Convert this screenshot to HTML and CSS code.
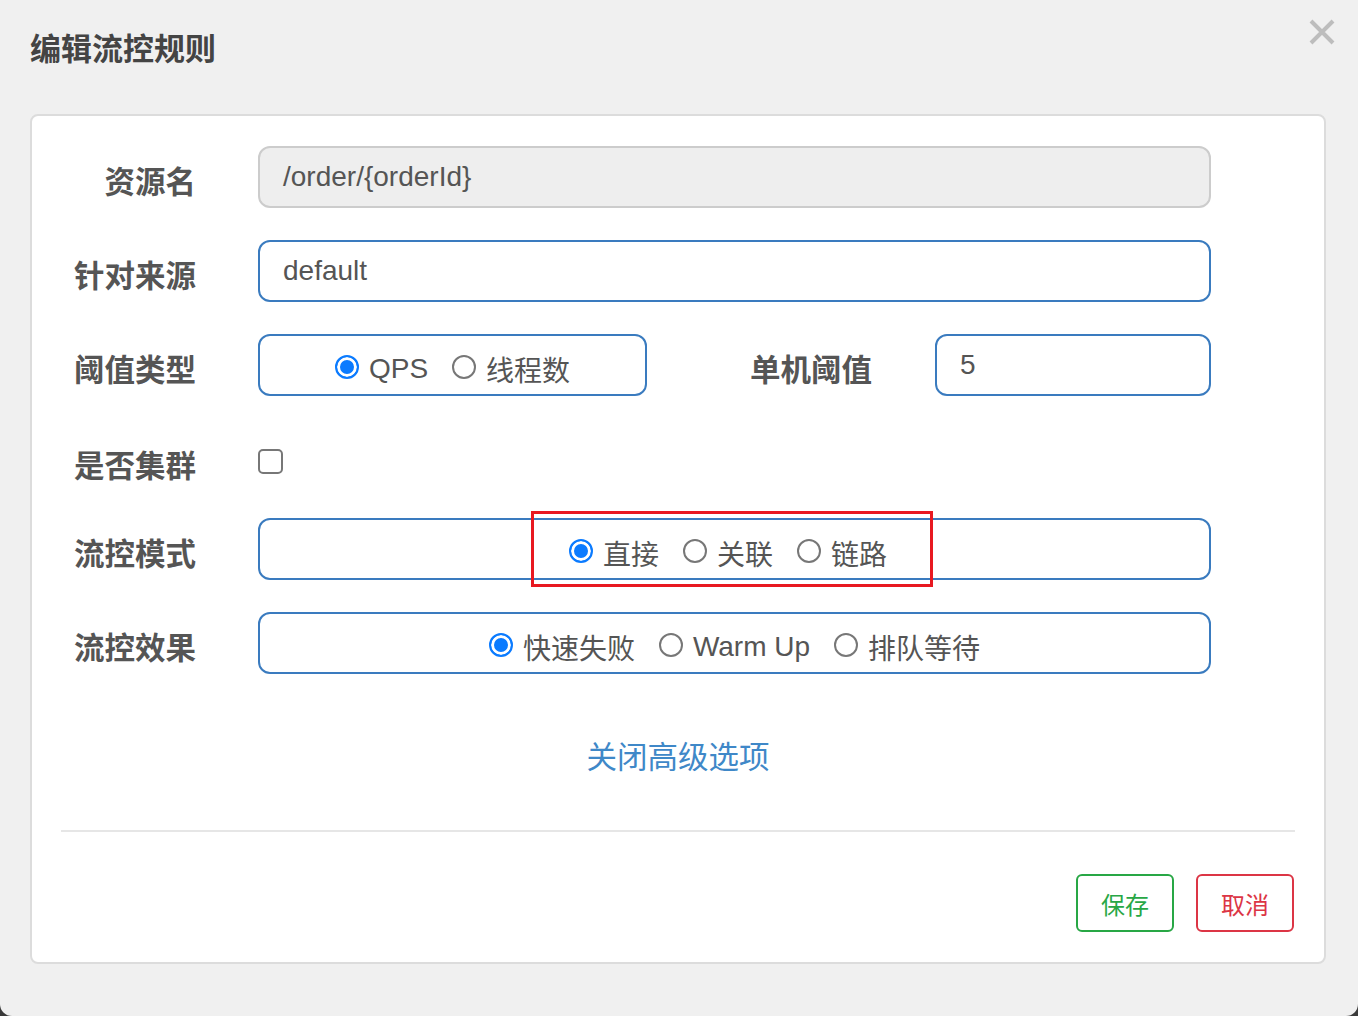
FILE: index.html
```html
<!DOCTYPE html>
<html lang="zh-CN">

<head>
  <meta charset="UTF-8">
  <meta name="viewport" content="width=device-width, initial-scale=1.0">
  <link rel="stylesheet" href="styles.css">
  <title>编辑流控规则</title>
</head>

<body>
  <div class="dialog">
    <div class="header">
      <h1>编辑流控规则</h1>
      <span class="close">
        <svg width="26" height="26" viewBox="0 0 26 26">
          <path d="M2 2 L24 24 M24 2 L2 24" stroke="#bdbdbd" stroke-width="4" fill="none" />
        </svg>
      </span>
    </div>

    <div class="panel">
      <div class="form">
        <div class="row">
          <label class="label">资源名</label>
          <div class="field disabled">/order/{orderId}</div>
        </div>

        <div class="row">
          <label class="label">针对来源</label>
          <div class="field">default</div>
        </div>

        <div class="row">
          <label class="label">阈值类型</label>
          <div class="field radios short">
            <label class="opt"><input type="radio" name="grade" checked>QPS</label>
            <label class="opt"><input type="radio" name="grade">线程数</label>
          </div>
          <label class="label second">单机阈值</label>
          <div class="field">5</div>
        </div>

        <div class="row check-row">
          <label class="label">是否集群</label>
          <input type="checkbox" class="check">
        </div>

        <div class="row">
          <label class="label">流控模式</label>
          <div class="field radios mark-wrap">
            <label class="opt"><input type="radio" name="strategy" checked>直接</label>
            <label class="opt"><input type="radio" name="strategy">关联</label>
            <label class="opt"><input type="radio" name="strategy">链路</label>
            <!-- 截图上的红框标注 -->
            <div class="mark"></div>
          </div>
        </div>

        <div class="row">
          <label class="label">流控效果</label>
          <div class="field radios">
            <label class="opt"><input type="radio" name="behavior" checked>快速失败</label>
            <label class="opt"><input type="radio" name="behavior">Warm Up</label>
            <label class="opt"><input type="radio" name="behavior">排队等待</label>
          </div>
        </div>
      </div>

      <div class="more"><a href="#">关闭高级选项</a></div>

      <div class="line"></div>

      <div class="actions">
        <button class="btn save">保存</button>
        <button class="btn cancel">取消</button>
      </div>
    </div>
  </div>
</body>

</html>
```

FILE: styles.css
```css
:root {
  --label-width: 135px;
  --label-gap: 62px;
  --field-border: #3a7bbf;
  --text: #555;
}

html {
  height: 100%;
  background-color: #3a3a3a;
}

body {
  margin: 0;
  height: 100%;
  background-color: #f0f0f0;
  border-radius: 0 0 12px 12px;
  font-family: "Liberation Sans", "Noto Sans CJK SC", sans-serif;
  color: var(--text);
}

.dialog {
  padding: 0 32px 0 30px;
}

.header {
  height: 114px;
  display: flex;
  justify-content: space-between;
  align-items: flex-start;
}

.header h1 {
  margin: 30px 0 0;
  font-size: 31px;
  line-height: 40px;
  font-weight: bold;
  color: #444;
}

.close {
  margin: 19px -9px 0 0;
  display: flex;
}

.panel {
  background-color: #fff;
  border: 2px solid #dcdcdc;
  border-radius: 8px;
  padding: 30px 29px 30px 29px;
}

.form {
  padding-right: 84px;
}

.row {
  display: flex;
  align-items: center;
  height: 62px;
  margin-bottom: 32px;
}

.label {
  width: var(--label-width);
  margin-right: var(--label-gap);
  flex-shrink: 0;
  text-align: right;
  font-size: 30.5px;
  font-weight: bold;
  padding-top: 6px;
  color: var(--text);
  white-space: nowrap;
}

.label.second {
  width: 164px;
  margin-left: 61px;
  margin-right: 63px;
}

.field {
  flex: 1;
  height: 62px;
  box-sizing: border-box;
  border: 2px solid var(--field-border);
  border-radius: 12px;
  padding: 0 23px;
  display: flex;
  align-items: center;
  font-size: 28px;
  color: var(--text);
}

.field.disabled {
  background-color: #eee;
  border-color: #ccc;
}

.radios {
  justify-content: center;
  gap: 24px;
  padding-top: 7px;
}

.radios.short {
  flex: 0 0 389px;
}

.opt {
  display: flex;
  align-items: center;
  gap: 10px;
}

.opt input {
  appearance: none;
  margin: 0;
  width: 24px;
  height: 24px;
  box-sizing: border-box;
  border-radius: 50%;
  border: 2px solid #777;
  background-color: #fff;
  position: relative;
  top: -2px;
}

.opt input:checked {
  border-color: #0b7bff;
  background-color: #0b7bff;
  box-shadow: inset 0 0 0 3px #fff;
}

.check-row {
  height: 50px;
  padding-top: 8px;
}

.check {
  appearance: none;
  margin: 0;
  width: 25px;
  height: 25px;
  box-sizing: border-box;
  border: 2px solid #777;
  border-radius: 5px;
  background-color: #fff;
}

.mark-wrap {
  position: relative;
  padding-right: 36px;
}

.mark {
  position: absolute;
  left: 271px;
  top: -9px;
  width: 402px;
  height: 76px;
  box-sizing: border-box;
  border: 3px solid #e81820;
}

.more {
  text-align: center;
  margin-top: 63px;
  font-size: 30.5px;
  line-height: 40px;
}

.more a {
  color: #3f88c8;
  text-decoration: none;
}

.line {
  height: 2px;
  background-color: #e6e6e6;
  margin-top: 53px;
}

.actions {
  display: flex;
  justify-content: flex-end;
  gap: 22px;
  margin-top: 42px;
  padding-right: 1px;
}

.btn {
  width: 98px;
  height: 58px;
  background-color: #fff;
  border: 2px solid;
  border-radius: 6px;
  font-family: "Liberation Sans", "Noto Sans CJK SC", sans-serif;
  font-size: 24px;
}

.save {
  color: #28a745;
  border-color: #28a745;
}

.cancel {
  color: #dc3545;
  border-color: #dc3545;
}
```
